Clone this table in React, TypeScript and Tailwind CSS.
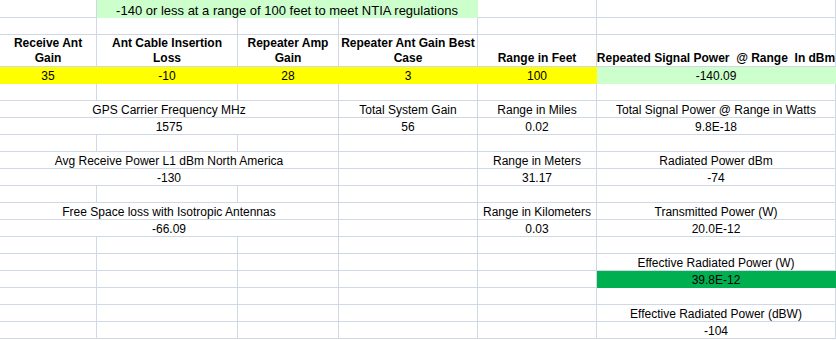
import React from "react";

type C = {
  t?: React.ReactNode;
  span?: number;
  bg?: string;
  bold?: boolean;
  big?: boolean;
  tall?: boolean;
};

const blank = (n: number): C[] => Array.from({ length: n }, () => ({}));

const rows: C[][] = [
  [{}, { t: "-140 or less at a range of 100 feet to meet NTIA regulations", span: 3, bg: "green", big: true }, {}, {}],
  blank(6),
  [
    { t: <>Receive Ant<br />Gain</>, bold: true, tall: true },
    { t: <>Ant Cable Insertion<br />Loss</>, bold: true, tall: true },
    { t: <>Repeater Amp<br />Gain</>, bold: true, tall: true },
    { t: <>Repeater Ant Gain Best<br />Case</>, bold: true, tall: true },
    { t: "Range in Feet", bold: true, tall: true },
    { t: "Repeated Signal Power  @ Range  In dBm", bold: true, tall: true },
  ],
  [
    { t: "35", bg: "yellow" },
    { t: "-10", bg: "yellow" },
    { t: "28", bg: "yellow" },
    { t: "3", bg: "yellow" },
    { t: "100", bg: "yellow" },
    { t: "-140.09", bg: "green" },
  ],
  blank(6),
  [{ t: "GPS Carrier Frequency MHz", span: 3 }, { t: "Total System Gain" }, { t: "Range in Miles" }, { t: "Total Signal Power @ Range in Watts" }],
  [{ t: "1575", span: 3 }, { t: "56" }, { t: "0.02" }, { t: "9.8E-18" }],
  blank(6),
  [{ t: "Avg Receive Power L1 dBm North America", span: 3 }, {}, { t: "Range in Meters" }, { t: "Radiated Power dBm" }],
  [{ t: "-130", span: 3 }, {}, { t: "31.17" }, { t: "-74" }],
  blank(6),
  [{ t: "Free Space loss with Isotropic Antennas", span: 3 }, {}, { t: "Range in Kilometers" }, { t: "Transmitted Power (W)" }],
  [{ t: "-66.09", span: 3 }, {}, { t: "0.03" }, { t: "20.0E-12" }],
  blank(6),
  [...blank(5), { t: "Effective Radiated Power (W)" }],
  [...blank(5), { t: "39.8E-12", bg: "dark" }],
  blank(6),
  [...blank(5), { t: "Effective Radiated Power (dBW)" }],
  [...blank(5), { t: "-104" }],
];

const fills: Record<string, string> = {
  green: "bg-[#ccffcc] border-[#ccffcc]",
  yellow: "bg-[#ffff00] border-[#ffff00]",
  dark: "bg-[#00b050] border-[#00b050]",
};

const spans: Record<number, string> = { 1: "col-span-1", 3: "col-span-3" };

export default function App() {
  return (
    <div className="w-[836px] h-[340px] bg-white text-black font-['Liberation_Sans',Arial,sans-serif] text-[12px]">
      <div className="grid grid-cols-[97px_141px_101px_139px_119px_239px] grid-rows-[18px_17px_32px_17px_repeat(15,17px)]">
        {rows.map((row, ri) =>
          row.map((c, ci) => (
            <div
              key={`${ri}-${ci}`}
              className={`${spans[c.span ?? 1]} flex items-end justify-center text-center whitespace-pre border-r border-b ${
                c.bg ? fills[c.bg] : "border-[#d0d7e5]"
              } ${c.bold ? "font-bold leading-[15px]" : c.big ? "text-[13px] leading-[13px]" : "leading-[13px]"}`}
            >
              {c.t}
            </div>
          ))
        )}
      </div>
    </div>
  );
}
